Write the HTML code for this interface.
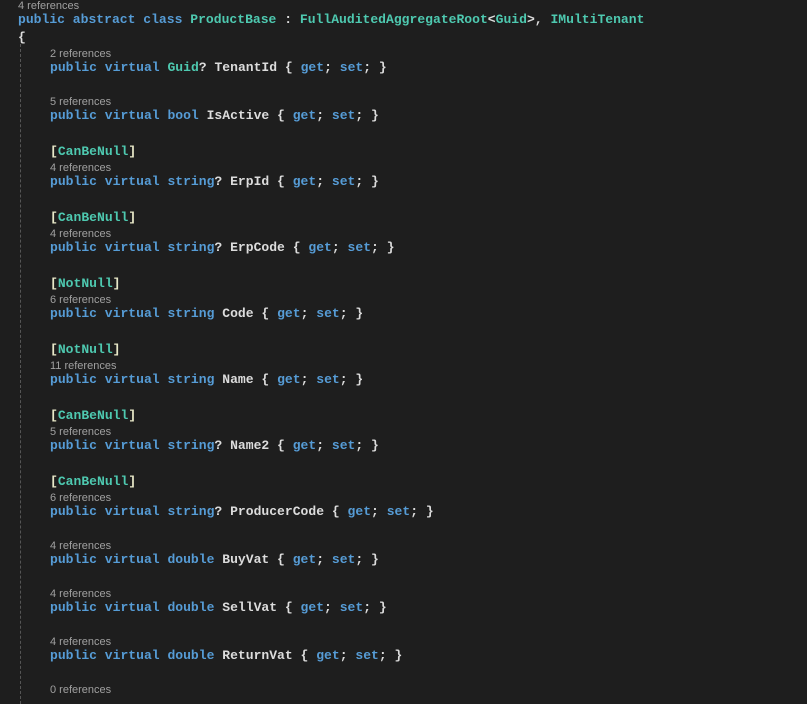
<!DOCTYPE html><html><head><style>
body{margin:0;background:#1e1e1e;width:807px;height:696px;overflow:hidden;position:relative}
#c{position:absolute;left:18px;top:0px}
.r{height:12px;line-height:12px;font:11px "Liberation Sans",sans-serif;color:#a0a0a0}
.l{height:18px;line-height:18px;font:bold 13.05px "Liberation Mono",monospace;color:#dcdcdc;white-space:pre}
.i{padding-left:32px}
.k{color:#569cd6}.t{color:#4ec9b0}.b{color:#e8e8c8}
#g{position:absolute;left:20px;top:44px;height:660px;border-left:1px dashed #555}
</style></head><body><div id="g"></div><div id="c">
<div class="r">4 references</div>
<div class="l"><span class="k">public abstract class</span> <span class="t">ProductBase</span> : <span class="t">FullAuditedAggregateRoot</span>&lt;<span class="t">Guid</span>&gt;, <span class="t">IMultiTenant</span></div>
<div class="l">{</div>
<div class="r i">2 references</div>
<div class="l i"><span class="k">public virtual</span> <span class="t">Guid</span>? TenantId { <span class="k">get</span>; <span class="k">set</span>; }</div>
<div class="l"> </div>
<div class="r i">5 references</div>
<div class="l i"><span class="k">public virtual bool</span> IsActive { <span class="k">get</span>; <span class="k">set</span>; }</div>
<div class="l"> </div>
<div class="l i"><span class="b">[</span><span class="t">CanBeNull</span><span class="b">]</span></div>
<div class="r i">4 references</div>
<div class="l i"><span class="k">public virtual string</span>? ErpId { <span class="k">get</span>; <span class="k">set</span>; }</div>
<div class="l"> </div>
<div class="l i"><span class="b">[</span><span class="t">CanBeNull</span><span class="b">]</span></div>
<div class="r i">4 references</div>
<div class="l i"><span class="k">public virtual string</span>? ErpCode { <span class="k">get</span>; <span class="k">set</span>; }</div>
<div class="l"> </div>
<div class="l i"><span class="b">[</span><span class="t">NotNull</span><span class="b">]</span></div>
<div class="r i">6 references</div>
<div class="l i"><span class="k">public virtual string</span> Code { <span class="k">get</span>; <span class="k">set</span>; }</div>
<div class="l"> </div>
<div class="l i"><span class="b">[</span><span class="t">NotNull</span><span class="b">]</span></div>
<div class="r i">11 references</div>
<div class="l i"><span class="k">public virtual string</span> Name { <span class="k">get</span>; <span class="k">set</span>; }</div>
<div class="l"> </div>
<div class="l i"><span class="b">[</span><span class="t">CanBeNull</span><span class="b">]</span></div>
<div class="r i">5 references</div>
<div class="l i"><span class="k">public virtual string</span>? Name2 { <span class="k">get</span>; <span class="k">set</span>; }</div>
<div class="l"> </div>
<div class="l i"><span class="b">[</span><span class="t">CanBeNull</span><span class="b">]</span></div>
<div class="r i">6 references</div>
<div class="l i"><span class="k">public virtual string</span>? ProducerCode { <span class="k">get</span>; <span class="k">set</span>; }</div>
<div class="l"> </div>
<div class="r i">4 references</div>
<div class="l i"><span class="k">public virtual double</span> BuyVat { <span class="k">get</span>; <span class="k">set</span>; }</div>
<div class="l"> </div>
<div class="r i">4 references</div>
<div class="l i"><span class="k">public virtual double</span> SellVat { <span class="k">get</span>; <span class="k">set</span>; }</div>
<div class="l"> </div>
<div class="r i">4 references</div>
<div class="l i"><span class="k">public virtual double</span> ReturnVat { <span class="k">get</span>; <span class="k">set</span>; }</div>
<div class="l"> </div>
<div class="r i">0 references</div>
</div></body></html>
